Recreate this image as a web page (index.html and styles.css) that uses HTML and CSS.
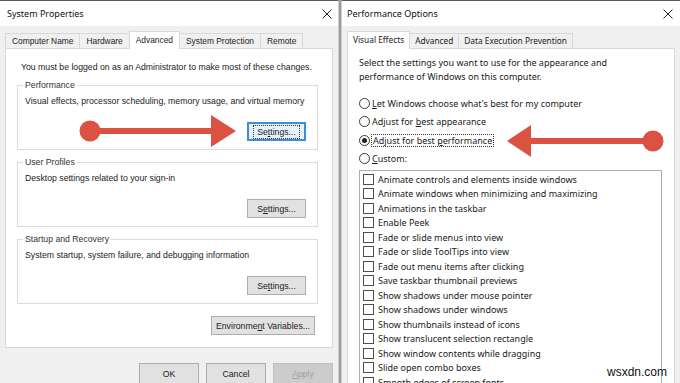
FILE: index.html
```html
<!DOCTYPE html>
<html lang="en">
<head>
    <meta charset="UTF-8">
    <title>System Properties / Performance Options</title>
    <link rel="stylesheet" href="styles.css">
</head>
<body>
<div class="screen">

    <!-- System Properties -->
    <div class="window window-left">
        <div class="titlebar">
            <span class="title">System Properties</span>
            <svg class="close" width="10" height="10" viewBox="0 0 10 10"><path d="M0.5 0.5L9.5 9.5M9.5 0.5L0.5 9.5" stroke="#222" stroke-width="1"/></svg>
        </div>
        <div class="tabs">
            <div class="tab">Computer Name</div>
            <div class="tab">Hardware</div>
            <div class="tab active">Advanced</div>
            <div class="tab">System Protection</div>
            <div class="tab">Remote</div>
        </div>
        <div class="panel">
            <p class="intro">You must be logged on as an Administrator to make most of these changes.</p>

            <div class="group">
                <div class="group-label">Performance</div>
                <p class="group-text">Visual effects, processor scheduling, memory usage, and virtual memory</p>
                <div class="group-actions">
                    <div class="btn focused"><span class="focus-ring">Se<u>t</u>tings...</span></div>
                </div>
            </div>

            <div class="group">
                <div class="group-label">User Profiles</div>
                <p class="group-text">Desktop settings related to your sign-in</p>
                <div class="group-actions">
                    <div class="btn">S<u>e</u>ttings...</div>
                </div>
            </div>

            <div class="group">
                <div class="group-label">Startup and Recovery</div>
                <p class="group-text">System startup, system failure, and debugging information</p>
                <div class="group-actions">
                    <div class="btn">Se<u>t</u>tings...</div>
                </div>
            </div>

            <div class="env-row">
                <div class="btn btn-wide">Environme<u>n</u>t Variables...</div>
            </div>
        </div>
        <div class="dialog-buttons">
            <div class="btn btn-dialog">OK</div>
            <div class="btn btn-dialog">Cancel</div>
            <div class="btn btn-dialog disabled"><u>A</u>pply</div>
        </div>

        <svg class="arrow" width="339" height="383" viewBox="0 0 339 383">
            <circle cx="90" cy="131" r="10.5" fill="#dc5242"/>
            <path d="M90 131H214" stroke="#dc5242" stroke-width="6"/>
            <polygon points="211,115 236,131 211,147" fill="#dc5242"/>
        </svg>
    </div>

    <!-- Performance Options -->
    <div class="window window-right">
        <div class="titlebar">
            <span class="title">Performance Options</span>
            <svg class="close" width="10" height="10" viewBox="0 0 10 10"><path d="M0.5 0.5L9.5 9.5M9.5 0.5L0.5 9.5" stroke="#222" stroke-width="1"/></svg>
        </div>
        <div class="tabs tabs-right">
            <div class="tab active">Visual Effects</div>
            <div class="tab">Advanced</div>
            <div class="tab">Data Execution Prevention</div>
        </div>
        <div class="panel panel-right">
            <p class="intro-right">Select the settings you want to use for the appearance and<br>performance of Windows on this computer.</p>

            <div class="options">
                <div class="option"><span class="radio"></span><span><u>L</u>et Windows choose what's best for my computer</span></div>
                <div class="option"><span class="radio"></span><span>Adjust for <u>b</u>est appearance</span></div>
                <div class="option"><span class="radio checked"></span><span class="focus-label">Adjust for best <u>p</u>erformance</span></div>
                <div class="option"><span class="radio"></span><span><u>C</u>ustom:</span></div>
            </div>

            <div class="listbox">
                <div class="item"><span class="check"></span>Animate controls and elements inside windows</div>
                <div class="item"><span class="check"></span>Animate windows when minimizing and maximizing</div>
                <div class="item"><span class="check"></span>Animations in the taskbar</div>
                <div class="item"><span class="check"></span>Enable Peek</div>
                <div class="item"><span class="check"></span>Fade or slide menus into view</div>
                <div class="item"><span class="check"></span>Fade or slide ToolTips into view</div>
                <div class="item"><span class="check"></span>Fade out menu items after clicking</div>
                <div class="item"><span class="check"></span>Save taskbar thumbnail previews</div>
                <div class="item"><span class="check"></span>Show shadows under mouse pointer</div>
                <div class="item"><span class="check"></span>Show shadows under windows</div>
                <div class="item"><span class="check"></span>Show thumbnails instead of icons</div>
                <div class="item"><span class="check"></span>Show translucent selection rectangle</div>
                <div class="item"><span class="check"></span>Show window contents while dragging</div>
                <div class="item"><span class="check"></span>Slide open combo boxes</div>
                <div class="item"><span class="check"></span>Smooth edges of screen fonts</div>
            </div>
        </div>

        <svg class="arrow arrow-right" width="339" height="383" viewBox="0 0 339 383">
            <circle cx="312" cy="141" r="10.5" fill="#dc5242"/>
            <path d="M189 141H312" stroke="#dc5242" stroke-width="6"/>
            <polygon points="190,125 166,141 190,157" fill="#dc5242"/>
        </svg>
    </div>

    <div class="watermark">wsxdn.com</div>
</div>
</body>
</html>
```

FILE: styles.css
```css
* {
    box-sizing: border-box;
}
body {
    margin: 0;
    width: 680px;
    height: 383px;
    overflow: hidden;
    background: #9b9b9b;
    font-family: "Liberation Sans", Arial, sans-serif;
    font-size: 8.7px;
    color: #1b1b1b;
}
p {
    margin: 0;
}
u {
    text-decoration-thickness: 1px;
    text-underline-offset: 1px;
}
.screen {
    position: relative;
    display: flex;
    gap: 2px;
    height: 383px;
}

/* windows */
.window {
    position: relative;
    width: 339px;
    height: 383px;
    display: flex;
    flex-direction: column;
    background: #f0f0f0;
    border-top: 1px solid #5a5a5a;
    overflow: hidden;
}
.window-left {
    border-right: 1px solid #cfcfcf;
}
.window-right {
    border-left: 1px solid #cfcfcf;
}
.titlebar {
    height: 25px;
    flex: none;
    display: flex;
    align-items: center;
    justify-content: space-between;
    padding: 0 6px 0 7px;
    background: #fff;
    font-family: "Noto Sans", sans-serif;
    font-size: 9px;
    color: #111;
}
.window-right .titlebar {
    padding: 0 7px 0 5px;
}

/* tabs */
.tabs {
    height: 17px;
    flex: none;
    display: flex;
    align-items: flex-end;
    margin-top: 5px;
    padding-left: 5px;
    font-size: 8.4px;
}
.tab {
    position: relative;
    height: 15px;
    line-height: 14px;
    padding: 0 6px;
    margin-right: -1px;
    border: 1px solid #d9d9d9;
    border-bottom: none;
    background: #f0f0f0;
    white-space: nowrap;
}
.tab.active {
    z-index: 1;
    height: 18px;
    line-height: 16px;
    margin-bottom: -1px;
    background: #fff;
}
.tabs-right {
    font-family: "Noto Sans", sans-serif;
    font-size: 8.3px;
}
.tabs-right .tab {
    padding: 0 5px;
}
.panel {
    height: 300px;
    flex: none;
    margin: 0 5px;
    background: #fff;
    border: 1px solid #d9d9d9;
}
.panel-right {
    height: auto;
    flex: 1;
    border-bottom: none;
    font-family: "Noto Sans", sans-serif;
    font-size: 9px;
    color: #1a1a1a;
}

/* system properties content */
.intro {
    margin: 12px 0 0 15px;
    line-height: 12px;
}
.group {
    margin: 12px 14px 0 11px;
    padding: 0 11px 8px 7px;
    border: 1px solid #dcdcdc;
}
.group-label {
    width: fit-content;
    margin: -7px 0 0 -2px;
    padding: 0 2px;
    line-height: 12px;
    background: #fff;
    color: #333;
}
.group-text {
    margin-top: 4px;
    line-height: 12px;
}
.group-actions {
    display: flex;
    justify-content: flex-end;
    margin-top: 15px;
}
.env-row {
    display: flex;
    justify-content: flex-end;
    margin: 12px 17px 0 0;
}
.btn {
    width: 59px;
    height: 19px;
    display: flex;
    align-items: center;
    justify-content: center;
    background: #e1e1e1;
    border: 1px solid #adadad;
    white-space: nowrap;
}
.btn.focused {
    background: #e5f1fb;
    border: 2px solid #3c8fd6;
}
.focus-ring {
    padding: 1px 3px;
    outline: 1px dotted #333;
}
.btn-wide {
    width: 104px;
}
.dialog-buttons {
    display: flex;
    justify-content: flex-end;
    gap: 7px;
    margin-top: 15px;
    padding-right: 5px;
}
.btn-dialog {
    width: 60px;
    height: 21px;
}
.btn.disabled {
    background: #cccccc;
    border-color: #bfbfbf;
    color: #a0a0a0;
}

/* performance options content */
.intro-right {
    margin: 7px 0 0 11px;
    line-height: 14px;
}
.options {
    margin: 10px 0 0 11px;
}
.option {
    height: 18.5px;
    display: flex;
    align-items: center;
    gap: 2px;
}
.radio {
    width: 11px;
    height: 11px;
    flex: none;
    display: flex;
    align-items: center;
    justify-content: center;
    border: 1px solid #3a3a3a;
    border-radius: 50%;
    background: #fff;
}
.radio.checked::after {
    content: "";
    width: 5px;
    height: 5px;
    border-radius: 50%;
    background: #222;
}
.focus-label {
    padding: 0 1px;
    line-height: 11px;
    outline: 1px dotted #333;
}
.listbox {
    margin: 2px 12px 0 11px;
    padding: 1px 0 0 3px;
    border: 1px solid #adadad;
    background: #fff;
}
.item {
    height: 14.5px;
    display: flex;
    align-items: center;
    gap: 4px;
    white-space: nowrap;
}
.check {
    width: 11px;
    height: 11px;
    flex: none;
    border: 1px solid #4d4d4d;
    background: #fff;
}

/* overlays */
.arrow {
    position: absolute;
    top: -1px;
    left: 0;
    pointer-events: none;
}
.arrow-right {
    left: -1px;
}
.watermark {
    position: absolute;
    left: 607px;
    top: 365px;
    font-family: "Liberation Sans", Arial, sans-serif;
    font-size: 12px;
    color: #111;
    text-shadow: 0 0 2px #fff, 0 0 2px #fff;
}
```
